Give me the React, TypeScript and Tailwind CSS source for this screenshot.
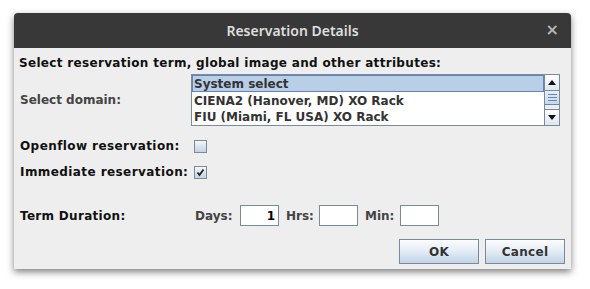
import React from "react";

const dv = { fontFamily: '"DejaVu Sans", "Liberation Sans", sans-serif' };

function CheckBox({ checked }: { checked?: boolean }) {
  return (
    <div className="ml-[3px] w-[13px] h-[13px] border border-[#7a8a99] bg-gradient-to-b from-[#f3f6fa] to-[#c3d3e4] flex items-center justify-center">
      {checked && (
        <svg width="9" height="9" viewBox="0 0 9 9">
          <path d="M1.5 4.5 L3.5 7 L7.5 1.5" stroke="#222" strokeWidth="1.8" fill="none" />
        </svg>
      )}
    </div>
  );
}

function Field({ value }: { value?: string }) {
  return (
    <div className="w-[39px] h-[21px] border border-[#7a8a99] bg-white flex items-center justify-end pr-[3px] text-[12px] font-bold text-black">
      {value}
    </div>
  );
}

function Btn({ label }: { label: string }) {
  return (
    <div className="w-[80px] h-[25px] border border-[#7a8a99] bg-gradient-to-b from-[#fbfcfe] via-[#e3ecf5] to-[#c1d4e8] flex items-center justify-center text-[12px] font-bold text-[#333] tracking-[0.3px]">
      {label}
    </div>
  );
}

export default function App() {
  return (
    <div className="w-[590px] h-[289px] bg-white pt-[13px] pl-[14px]" style={dv}>
      <div className="w-[557px] h-[256px] bg-[#eeeeee] rounded-t-[4px] shadow-[0_3px_7px_rgba(0,0,0,0.5)] flex flex-col">
        <div className="h-[35px] bg-[#383838] rounded-t-[4px] flex items-center justify-center relative">
          <span
            className="text-[14px] font-semibold text-[#dedede]"
            style={{ fontFamily: '"Noto Sans", "Open Sans", sans-serif' }}
          >
            Reservation Details
          </span>
          <span className="absolute right-[12px] top-[9px] text-[16px] leading-[16px] font-bold text-[#b5b5b5]" style={{ fontFamily: '"DejaVu Sans", sans-serif' }}>
            ×
          </span>
        </div>
        <div className="flex flex-col px-[6px]">
          <div className="mt-[7px] h-[16px] leading-[16px] text-[12px] font-bold text-[#111] tracking-[0.32px] -ml-[1px]">
            Select reservation term, global image and other attributes:
          </div>
          <div className="mt-[3px] grid grid-cols-[171px_1fr] items-center">
            <div className="text-[12px] font-bold text-[#444]">Select domain:</div>
            <div className="w-[369px] h-[52px] border border-[#7a8a99] bg-white flex">
              <div className="flex-1 flex flex-col text-[12px] font-bold text-[#333]">
                <div className="h-[17px] bg-[#b8cfe5] border border-[#6382bf] flex items-center pl-[1px]">System select</div>
                <div className="h-[17px] flex items-center pl-[2px]">CIENA2 (Hanover, MD) XO Rack</div>
                <div className="h-[16px] flex items-center pl-[2px]">FIU (Miami, FL USA) XO Rack</div>
              </div>
              <div className="w-[15px] flex flex-col bg-[#eeeeee] border-l border-[#7a8a99]">
                <div className="h-[16px] border-b border-[#7a8a99] bg-gradient-to-b from-white to-[#dde6ef] flex items-center justify-center">
                  <svg width="8" height="5" viewBox="0 0 8 5"><path d="M0 5 L4 0 L8 5 Z" fill="#111" /></svg>
                </div>
                <div className="h-[14px] border-b border-[#6382bf] bg-gradient-to-b from-[#e6eef7] to-[#c7d8ea] flex flex-col items-center justify-center gap-[2px]">
                  <div className="w-[9px] h-px bg-[#6382bf]" />
                  <div className="w-[9px] h-px bg-[#6382bf]" />
                  <div className="w-[9px] h-px bg-[#6382bf]" />
                </div>
                <div className="flex-1" />
                <div className="h-[16px] border-t border-[#7a8a99] bg-gradient-to-b from-white to-[#dde6ef] flex items-center justify-center">
                  <svg width="8" height="5" viewBox="0 0 8 5"><path d="M0 0 L4 5 L8 0 Z" fill="#111" /></svg>
                </div>
              </div>
            </div>
          </div>
          <div className="mt-[11px] grid grid-cols-[171px_1fr] items-center h-[13px]">
            <div className="text-[12px] font-bold text-[#111] tracking-[0.42px]">Openflow reservation:</div>
            <CheckBox />
          </div>
          <div className="mt-[13px] grid grid-cols-[171px_1fr] items-center h-[13px]">
            <div className="text-[12px] font-bold text-[#111] tracking-[0.42px]">Immediate reservation:</div>
            <CheckBox checked />
          </div>
          <div className="mt-[29px] grid grid-cols-[175px_1fr] items-center h-[21px]">
            <div className="text-[12px] font-bold text-[#111] tracking-[0.3px]">Term Duration:</div>
            <div className="flex items-center text-[12px] font-bold text-[#444]">
              <span className="w-[45px]">Days:</span>
              <Field value="1" />
              <span className="ml-[7px] w-[33px]">Hrs:</span>
              <Field />
              <span className="ml-[7px] w-[35px]">Min:</span>
              <Field />
            </div>
          </div>
          <div className="mt-[13px] flex justify-end gap-[6px]">
            <Btn label="OK" />
            <Btn label="Cancel" />
          </div>
        </div>
      </div>
    </div>
  );
}
